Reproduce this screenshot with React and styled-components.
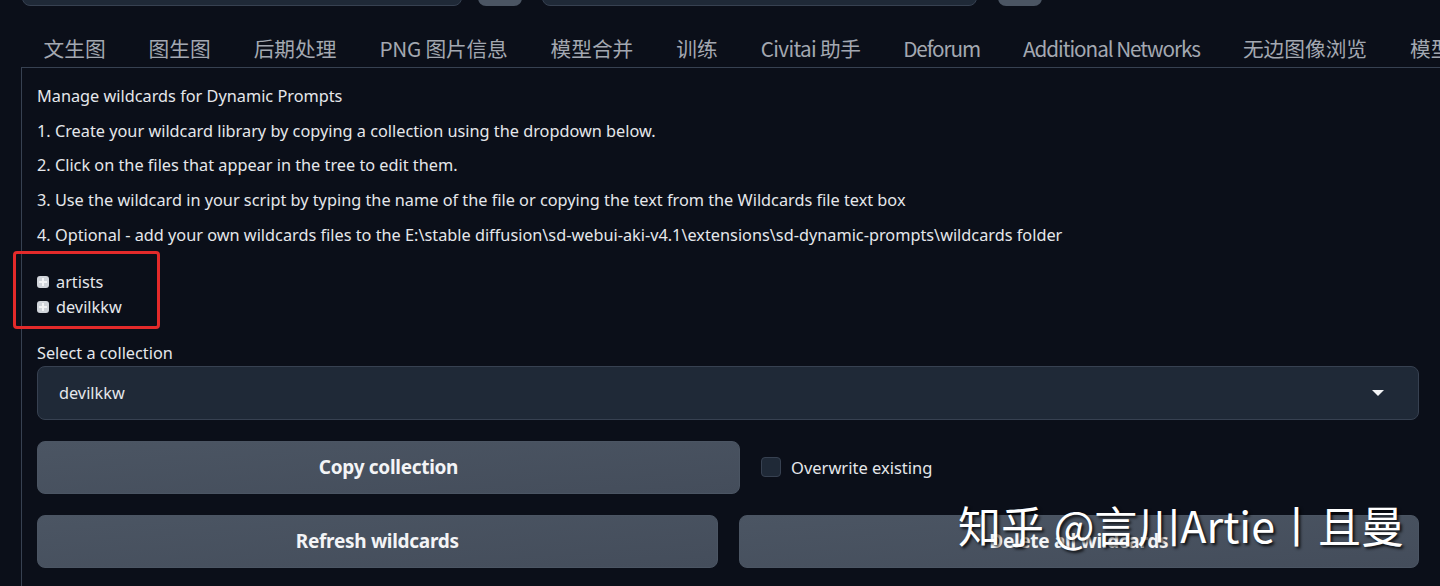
import React from "react";
import styled, { createGlobalStyle } from "styled-components";

const Global = createGlobalStyle`
  html, body { margin: 0; padding: 0; background: #0b0f19; overflow: hidden; }
  body { font-family: "Noto Sans", "Noto Sans CJK SC", sans-serif; color: #e5e7eb; }
`;

const Page = styled.div`
  position: relative;
  width: 1440px;
  height: 586px;
  overflow: hidden;
  background: #0b0f19;
`;

const TopRow = styled.div`
  display: flex;
  align-items: flex-end;
  height: 6px;
  overflow: hidden;
  padding-left: 22px;
`;

const TopInput = styled.div`
  flex-shrink: 0;
  width: ${(p) => p.$w}px;
  height: 40px;
  margin-left: ${(p) => p.$ml || 0}px;
  background: #1f2937;
  border: 1px solid #374151;
  border-radius: 8px;
  box-sizing: border-box;
`;

const TopButton = styled.div`
  flex-shrink: 0;
  width: ${(p) => p.$w}px;
  height: 40px;
  margin-left: ${(p) => p.$ml || 0}px;
  background: #4b5563;
  border-radius: 8px;
`;

const Tabs = styled.div`
  display: flex;
  align-items: center;
  height: 61px;
  padding-left: 22px;
  white-space: nowrap;
`;

const Tab = styled.div`
  padding: 0 21.5px;
  font-family: "Noto Sans CJK SC", "Noto Sans", sans-serif;
  font-size: 20.7px;
  letter-spacing: ${(p) => p.$ls || 0}px;
  color: #a3a8b1;
  line-height: 36px;
  margin-top: 22px;
  flex-shrink: 0;
`;

const Panel = styled.div`
  margin-left: 21px;
  border-top: 1px solid #374151;
  border-left: 1px solid #374151;
  padding: 15px 21px 0 15px;
  height: 540px;
`;

const Para = styled.p`
  margin: 0 0 8.7px 0;
  font-size: 16.3px;
  line-height: 26px;
  color: #e5e7eb;
`;

const Tree = styled.div`
  position: relative;
  margin-top: 22px;
  display: flex;
  flex-direction: column;
`;

const TreeItem = styled.div`
  display: flex;
  align-items: center;
  gap: 7px;
  height: 25px;
  font-size: 16.3px;
  color: #e5e7eb;
`;

const TreeIcon = styled.span`
  width: 12px;
  height: 12px;
  border-radius: 3px;
  background: #d1d5db;
  position: relative;
  flex-shrink: 0;
  &::before, &::after {
    content: "";
    position: absolute;
    background: #f3f4f6;
  }
  &::before { left: 2px; right: 2px; top: 5px; height: 2px; }
  &::after { top: 2px; bottom: 2px; left: 5px; width: 2px; }
`;

const Annotation = styled.div`
  position: absolute;
  left: -24px;
  top: -19px;
  width: 147px;
  height: 78px;
  box-sizing: border-box;
  border: 3px solid #e32a2a;
  border-radius: 4px;
  pointer-events: none;
`;

const Label = styled.div`
  margin-top: 21px;
  font-size: 16.3px;
  line-height: 24px;
  color: #e5e7eb;
`;

const Dropdown = styled.div`
  margin-top: 1px;
  height: 54px;
  box-sizing: border-box;
  background: #1f2937;
  border: 1px solid #374151;
  border-radius: 8px;
  display: flex;
  align-items: center;
  justify-content: space-between;
  padding: 0 34px 0 21px;
  font-size: 16.3px;
  color: #e5e7eb;
`;

const Caret = styled.span`
  width: 0;
  height: 0;
  border-left: 6px solid transparent;
  border-right: 6px solid transparent;
  border-top: 6px solid #f3f4f6;
`;

const Row = styled.div`
  display: grid;
  grid-template-columns: ${(p) => p.$cols};
  gap: 21px;
  margin-top: 21px;
  align-items: center;
`;

const Button = styled.button`
  height: 53px;
  border: 1px solid #4b5563;
  border-radius: 8px;
  background: linear-gradient(to bottom right, #4b5563, #444d5b);
  color: #f3f4f6;
  font-family: "Noto Sans", sans-serif;
  font-size: 19px;
  font-weight: 700;
  letter-spacing: -0.3px;
  cursor: pointer;
`;

const CheckWrap = styled.label`
  display: flex;
  align-items: center;
  gap: 10px;
  font-size: 16.5px;
  color: #e5e7eb;
`;

const Box = styled.span`
  width: 20px;
  height: 20px;
  box-sizing: border-box;
  border-radius: 4px;
  background: #1f2937;
  border: 1px solid #374151;
`;

const Watermark = styled.div`
  position: absolute;
  left: 958px;
  top: 497px;
  font-family: "Noto Sans CJK SC", "Noto Sans", sans-serif;
  font-size: 43px;
  line-height: 54px;
  color: #ffffff;
  white-space: nowrap;
  text-shadow: 2px 2px 3px rgba(0, 0, 0, 0.85);
  pointer-events: none;
`;

const tabs = [
  { t: "文生图" },
  { t: "图生图" },
  { t: "后期处理" },
  { t: "PNG 图片信息", ls: -0.2 },
  { t: "模型合并" },
  { t: "训练" },
  { t: "Civitai 助手", ls: -0.65 },
  { t: "Deforum", ls: -1.1 },
  { t: "Additional Networks", ls: -1.05 },
  { t: "无边图像浏览" },
  { t: "模型转换" },
];

const paras = [
  "Manage wildcards for Dynamic Prompts",
  "1. Create your wildcard library by copying a collection using the dropdown below.",
  "2. Click on the files that appear in the tree to edit them.",
  "3. Use the wildcard in your script by typing the name of the file or copying the text from the Wildcards file text box",
  "4. Optional - add your own wildcards files to the E:\\stable diffusion\\sd-webui-aki-v4.1\\extensions\\sd-dynamic-prompts\\wildcards folder",
];

export default function App() {
  return (
    <Page>
      <Global />
      <TopRow>
        <TopInput $w={440} />
        <TopButton $w={44} $ml={16} />
        <TopInput $w={435} $ml={20} />
        <TopButton $w={44} $ml={21} />
      </TopRow>
      <Tabs>
        {tabs.map(({ t, ls }) => (
          <Tab key={t} $ls={ls}>
            {t}
          </Tab>
        ))}
      </Tabs>
      <Panel>
        {paras.map((p) => (
          <Para key={p}>{p}</Para>
        ))}
        <Tree>
          <Annotation />
          <TreeItem>
            <TreeIcon />
            artists
          </TreeItem>
          <TreeItem>
            <TreeIcon />
            devilkkw
          </TreeItem>
        </Tree>
        <Label>Select a collection</Label>
        <Dropdown>
          devilkkw
          <Caret />
        </Dropdown>
        <Row $cols="703fr 658fr">
          <Button>Copy collection</Button>
          <CheckWrap>
            <Box />
            Overwrite existing
          </CheckWrap>
        </Row>
        <Row $cols="1fr 1fr">
          <Button>Refresh wildcards</Button>
          <Button>Delete all wildcards</Button>
        </Row>
      </Panel>
      <Watermark>知乎 @言川Artie丨且曼</Watermark>
    </Page>
  );
}
